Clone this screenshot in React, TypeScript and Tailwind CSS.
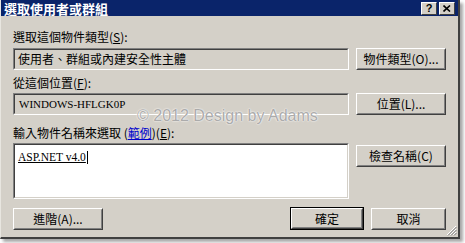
import React from 'react';

const cjk = { fontFamily: '"Noto Sans CJK TC", "Noto Sans CJK SC", sans-serif' };
const latin = { fontFamily: '"Liberation Serif", "Noto Sans CJK TC", serif' };

// classic win2k 3D boxes
function Sunken({ className = '', inner = '', children }: { className?: string; inner?: string; children?: React.ReactNode }) {
  return (
    <div className={`border border-t-[#808080] border-l-[#808080] border-b-white border-r-white ${className}`}>
      <div className={`h-full border border-t-[#404040] border-l-[#404040] border-b-[#d4d0c8] border-r-[#d4d0c8] ${inner}`}>
        {children}
      </div>
    </div>
  );
}

function Btn({ label, className = '', isDefault = false }: { label: string; className?: string; isDefault?: boolean }) {
  const body = (
    <div className="h-full border border-t-white border-l-white border-b-[#404040] border-r-[#404040]">
      <div className="h-full flex items-center justify-center border border-t-[#d4d0c8] border-l-[#d4d0c8] border-b-[#808080] border-r-[#808080] text-[12px] leading-none text-black" style={cjk}>
        {label}
      </div>
    </div>
  );
  if (isDefault) return <div className={`border border-black ${className}`}>{body}</div>;
  return <div className={className}>{body}</div>;
}

export default function App() {
  return (
    <div className="w-[465px] h-[243px] bg-white relative">
      <div className="w-[460px] h-[239px] bg-[#d4d0c8] border-l border-l-[#e8e6e0] border-r-2 border-r-[#404040] border-b-2 border-b-[#404040] shadow-[3px_3px_3px_rgba(0,0,0,0.35)] flex flex-col">
        {/* title bar */}
        <div className="h-[16px] bg-[#0a246a] flex items-center pl-[3px] pr-[3px]">
          <span className="text-white font-bold text-[13px] leading-none" style={cjk}>選取使用者或群組</span>
          <div className="ml-auto flex gap-[2px]">
            <div className="w-[16px] h-[13px] bg-[#d4d0c8] border border-t-white border-l-white border-b-[#404040] border-r-[#404040] flex items-center justify-center text-[11px] font-bold leading-none text-black" style={{ fontFamily: '"Liberation Sans", sans-serif' }}>?</div>
            <div className="w-[16px] h-[13px] bg-[#d4d0c8] border border-t-white border-l-white border-b-[#404040] border-r-[#404040] flex items-center justify-center">
              <svg width="8" height="7" viewBox="0 0 8 7">
                <path d="M0.5 0.5 L7 6.5 M7 0.5 L0.5 6.5" stroke="#000" strokeWidth="1.6" />
              </svg>
            </div>
          </div>
        </div>

        <div className="flex-1 pl-[12px] pr-[12px] flex flex-col text-black relative">
          <div className="mt-[13px] h-[17px] text-[12px] leading-[15px]" style={cjk}>
            選取這個物件類型(<span className="underline">S</span>):
          </div>
          <div className="mt-[2px] flex gap-[7px]">
            <Sunken className="flex-1 h-[22px]" inner="flex items-center pl-[3px]">
              <span className="text-[12px] leading-none" style={cjk}>使用者、群組或內建安全性主體</span>
            </Sunken>
            <Btn label="物件類型(O)..." className="w-[90px] h-[22px]" />
          </div>

          <div className="mt-[5px] h-[17px] text-[12px] leading-[15px]" style={cjk}>
            從這個位置(<span className="underline">F</span>):
          </div>
          <div className="mt-[1px] flex gap-[7px]">
            <Sunken className="flex-1 h-[22px]" inner="flex items-center pl-[4px]">
              <span className="text-[11px] leading-none" style={latin}>WINDOWS-HFLGK0P</span>
            </Sunken>
            <Btn label="位置(L)..." className="w-[90px] h-[22px]" />
          </div>

          <div className="mt-[10px] h-[17px] text-[12px] leading-[15px]" style={cjk}>
            輸入物件名稱來選取 (<span className="text-[#0000cc] underline">範例</span>)(<span className="underline">E</span>):
          </div>
          <div className="mt-[1px] flex gap-[7px] items-start">
            <Sunken className="flex-1 h-[56px]" inner="bg-white pl-[3px] pt-[6px] flex items-start">
              <span className="block text-[11.5px] leading-[13px] underline border-r border-black pr-[1px]" style={latin}>ASP.NET v4.0</span>
            </Sunken>
            <Btn label="檢查名稱(C)" className="w-[90px] h-[22px] mt-[2px]" />
          </div>

          <div className="mt-[8px] flex items-center">
            <Btn label="進階(A)..." className="w-[90px] h-[22px]" />
            <Btn label="確定" className="w-[74px] h-[23px] ml-auto" isDefault />
            <Btn label="取消" className="w-[75px] h-[22px] ml-[7px]" />
          </div>

          {/* watermark */}
          <div className="absolute left-[136px] top-[92px] text-[16px] leading-none text-[#ababab] [text-shadow:0_0_2px_#ffffff,0_0_1px_#ffffff]" style={{ fontFamily: '"Liberation Sans", sans-serif' }}>
            © 2012 Design by Adams
          </div>

          {/* resize grip */}
          <svg className="absolute right-[1px] bottom-[1px]" width="11" height="11" viewBox="0 0 11 11">
            <path d="M10 1 L1 10 M10 4 L4 10 M10 7 L7 10" stroke="#ffffff" strokeWidth="1" />
            <path d="M10.5 2 L2 10.5 M10.5 5 L5 10.5 M10.5 8 L8 10.5" stroke="#808080" strokeWidth="1" />
          </svg>
        </div>
      </div>
    </div>
  );
}
